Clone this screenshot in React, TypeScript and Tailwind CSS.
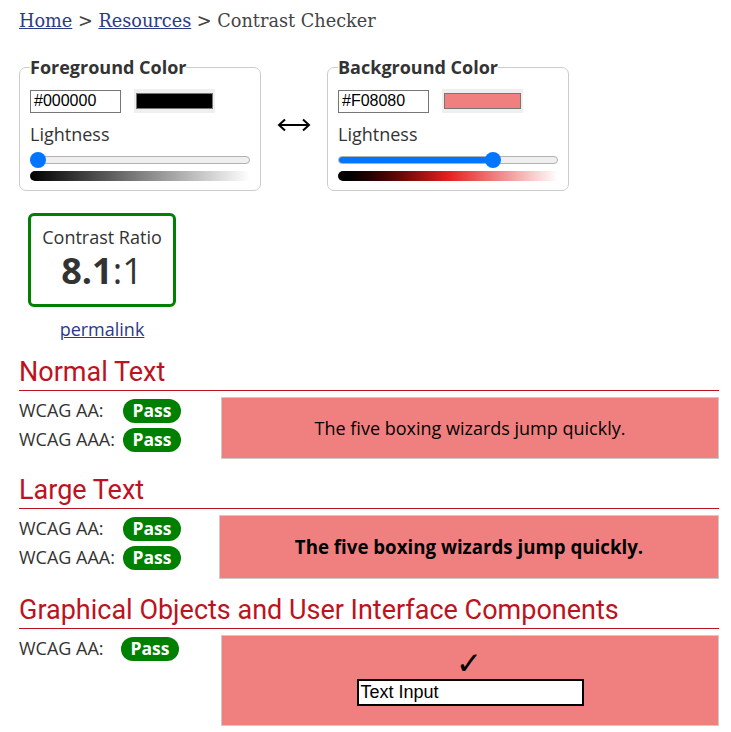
const pink = "#F08080";

const Swatch = ({ color }: { color: string }) => (
  <div className="w-[81px] h-[24px] bg-[#efefef] flex items-center justify-center">
    <div className="w-[77px] h-[16px] border border-[#767676]" style={{ background: color }} />
  </div>
);

const Slider = ({ pct }: { pct: number }) => (
  <div className="relative h-[16px] flex items-center">
    <div className="w-full h-[8px] rounded-full bg-[#efefef] border border-[#b2b2b2] overflow-hidden">
      <div className="h-full bg-[#0075ff]" style={{ width: `${pct}%` }} />
    </div>
    <div
      className="absolute top-0 w-[16px] h-[16px] rounded-full bg-[#0075ff]"
      style={{ left: `calc(${pct}% - ${pct * 0.16}px)` }}
    />
  </div>
);

const ColorPanel = ({
  title,
  hex,
  pct,
  gradient,
}: {
  title: string;
  hex: string;
  pct: number;
  gradient: string;
}) => (
  <fieldset className="w-[242px] border border-[#cccccc] rounded-[7px] px-[10px] pb-[9px] pt-[10px]">
    <legend className="text-[18px] font-bold text-[#333] leading-[24px]">{title}</legend>
    <div className="flex items-center gap-[13px]">
      <div className="w-[91px] h-[23px] border border-[#767676] px-[3px] flex items-center font-['Liberation_Sans',Arial,sans-serif] text-[16px] text-black">
        {hex}
      </div>
      <Swatch color={hex} />
    </div>
    <div className="text-[18px] text-[#333] mt-[9px] leading-[24px]">Lightness</div>
    <div className="mt-[6px]">
      <Slider pct={pct} />
    </div>
    <div className={`h-[10px] rounded-l-[5px] mt-[3px] ${gradient}`} />
  </fieldset>
);

const PassBadge = () => (
  <span className="inline-flex items-center justify-center w-[58px] h-[24px] rounded-full bg-[#008000] text-white font-bold text-[17.5px] leading-none">
    Pass
  </span>
);

const Row = ({ label, w = "w-[104px]" }: { label: string; w?: string }) => (
  <div className="flex items-center h-[29px]">
    <span className={`${w} text-[18px] text-[#333]`}>{label}</span>
    <PassBadge />
  </div>
);

const Heading = ({ children }: { children: string }) => (
  <div>
    <h2 className="font-['Roboto',sans-serif] text-[27px] text-[#bd1220] leading-[32px] pb-[2px]">
      {children}
    </h2>
    <div className="h-[1px] bg-[#bd1220]" />
  </div>
);

export default function App() {
  return (
    <div className="font-['Open_Sans',sans-serif] text-[#333] pl-[19px] pr-[12px] bg-white min-h-[732px]">
      {/* Migas de pan */}
      <div className="font-['DejaVu_Serif',serif] text-[17.7px] text-[#444] pt-[9px] leading-[24px]">
        <span className="underline text-[#2b3a86]">Home</span> &gt;{" "}
        <span className="underline text-[#2b3a86]">Resources</span> &gt; Contrast Checker
      </div>

      {/* Paneles de color */}
      <div className="flex mt-[22px]">
        <ColorPanel
          title="Foreground Color"
          hex="#000000"
          pct={0}
          gradient="bg-gradient-to-r from-black to-white/0"
        />
        <div className="w-[66px] flex items-center justify-center pt-[4px]">
          <svg width="34" height="14" viewBox="0 0 34 14" fill="none" stroke="black" strokeWidth="2" aria-hidden="true">
            <path d="M2 7 H32" />
            <path d="M8 1.5 L2 7 L8 12.5" strokeLinejoin="miter" />
            <path d="M26 1.5 L32 7 L26 12.5" strokeLinejoin="miter" />
          </svg>
        </div>
        <ColorPanel
          title="Background Color"
          hex="#F08080"
          pct={72}
          gradient="bg-gradient-to-r from-black via-[#e51f1f] to-white/0"
        />
      </div>

      {/* Ratio */}
      <div className="w-[148px] ml-[9px] mt-[22px] border-[3px] border-[#008000] rounded-[6px] h-[94px] flex flex-col items-center justify-center">
        <div className="text-[18px] leading-[24px] -mt-[2px]">Contrast Ratio</div>
        <div className="text-[36px] leading-[44px]">
          <span className="font-bold">8.1</span>:1
        </div>
      </div>
      <div className="w-[148px] ml-[9px] text-center mt-[10px] leading-[24px]">
        <span className="underline text-[#2b3a86] text-[18px]">permalink</span>
      </div>

      {/* Normal text */}
      <div className="mt-[14px]">
        <Heading>Normal Text</Heading>
        <div className="flex mt-[6px]">
          <div className="w-[202px] -mt-[1px]">
            <Row label="WCAG AA:" />
            <Row label="WCAG AAA:" />
          </div>
          <div className="flex-1 h-[62px] bg-[#F08080] border border-[#cccccc] flex items-center justify-center text-[18px] text-black">
            The five boxing wizards jump quickly.
          </div>
        </div>
      </div>

      {/* Large text */}
      <div className="mt-[15px]">
        <Heading>Large Text</Heading>
        <div className="flex mt-[6px]">
          <div className="w-[200px] -mt-[1px]">
            <Row label="WCAG AA:" />
            <Row label="WCAG AAA:" />
          </div>
          <div className="flex-1 h-[64px] bg-[#F08080] border border-[#cccccc] flex items-center justify-center text-[18.7px] font-bold text-black">
            The five boxing wizards jump quickly.
          </div>
        </div>
      </div>

      {/* Graphical */}
      <div className="mt-[15px]">
        <Heading>Graphical Objects and User Interface Components</Heading>
        <div className="flex mt-[6px]">
          <div className="w-[202px] -mt-[1px]">
            <Row label="WCAG AA:" w="w-[102px]" />
          </div>
          <div
            className="flex-1 h-[91px] border border-[#cccccc] flex flex-col items-center justify-center pb-[6px]"
            style={{ background: pink }}
          >
            <div className="text-[31px] leading-[24px] text-black font-['DejaVu_Sans',sans-serif] -ml-[2px] mt-[2px]">✓</div>
            <div className="w-[227px] h-[27px] border-2 border-black bg-white px-[2px] flex items-center font-['Liberation_Sans',Arial,sans-serif] text-[18px] text-black mt-[4px]">
              Text Input
            </div>
          </div>
        </div>
      </div>
    </div>
  );
}
